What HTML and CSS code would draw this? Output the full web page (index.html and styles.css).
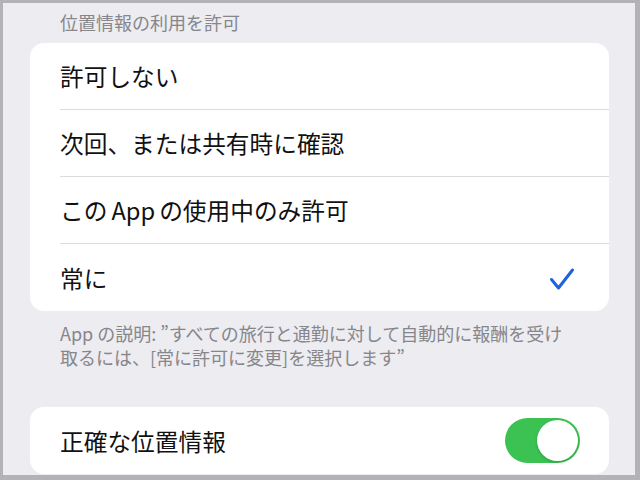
FILE: index.html
```html
<!DOCTYPE html>
<html lang="ja">
  <head>
    <meta charset="utf-8">
    <title>位置情報</title>
    <link rel="stylesheet" href="styles.css">
  </head>
  <body>
    <div class="screen">
      <div class="group-title">位置情報の利用を許可</div>
      <ul class="card">
        <li class="row">許可しない</li>
        <li class="row">次回、または共有時に確認</li>
        <li class="row"><span>この<span class="latin">App</span>の使用中のみ許可</span></li>
        <li class="row">
          <span>常に</span>
          <svg class="check" width="26" height="24" viewBox="0 0 26 24">
            <polyline points="2.5,12.5 9.5,21 23.5,3" fill="none" stroke="#1d63dc" stroke-width="3" stroke-linecap="round" stroke-linejoin="round"/>
          </svg>
        </li>
      </ul>
      <p class="group-footer">App<span class="gap"></span>の説明: ”すべての旅行と通勤に対して自動的に報酬を受け<br>取るには、[常に許可に変更]を選択します”</p>
      <ul class="card card-bottom">
        <li class="row">
          <span>正確な位置情報</span>
          <span class="toggle on"><span class="knob"></span></span>
        </li>
      </ul>
    </div>
  </body>
</html>
```

FILE: styles.css
```css
html,body,div,p,ul,li{
  margin:0;
  padding:0;
}
ul{
  list-style:none;
}
body{
  font-family:"Noto Sans CJK JP","Noto Sans",sans-serif;
  background:#b3b3b7;
}
.screen{
  box-sizing:border-box;
  width:640px;
  height:480px;
  overflow:hidden;
  padding:0 26px 0 27px;
  border-style:solid;
  border-color:#b3b3b7;
  border-width:3px 5px 5px 3px;
  background:#ececf1;
}
.group-title{
  margin-top:7px;
  padding-left:30px;
  font-size:18px;
  line-height:24px;
  color:#86868b;
}
.card{
  margin-top:9px;
  background:#fff;
  border-radius:14px;
  overflow:hidden;
}
.card .row{
  display:flex;
  align-items:center;
  justify-content:space-between;
  box-sizing:border-box;
  height:67px;
  margin-left:30px;
  padding-right:34px;
  font-size:23.7px;
  color:#111;
  border-bottom:1px solid #dcdce0;
}
.card .row:last-child{
  border-bottom:none;
}
.latin{
  margin:0 4px;
}
.gap{
  display:inline-block;
  width:4px;
}
.check{
  display:block;
  margin-top:2px;
}
.group-footer{
  margin-top:10px;
  padding:0 20px 0 30px;
  font-size:18px;
  line-height:24px;
  white-space:nowrap;
  color:#86868b;
}
.card-bottom{
  margin-top:38px;
}
.card-bottom .row{
  padding-right:29px;
}
.toggle{
  display:flex;
  justify-content:flex-end;
  box-sizing:border-box;
  width:75px;
  height:45px;
  padding:2px;
  border-radius:23px;
  background:#3cc153;
}
.toggle .knob{
  width:41px;
  height:41px;
  border-radius:50%;
  background:#fff;
  box-shadow:0 1px 3px rgba(0,0,0,.2);
}
```
